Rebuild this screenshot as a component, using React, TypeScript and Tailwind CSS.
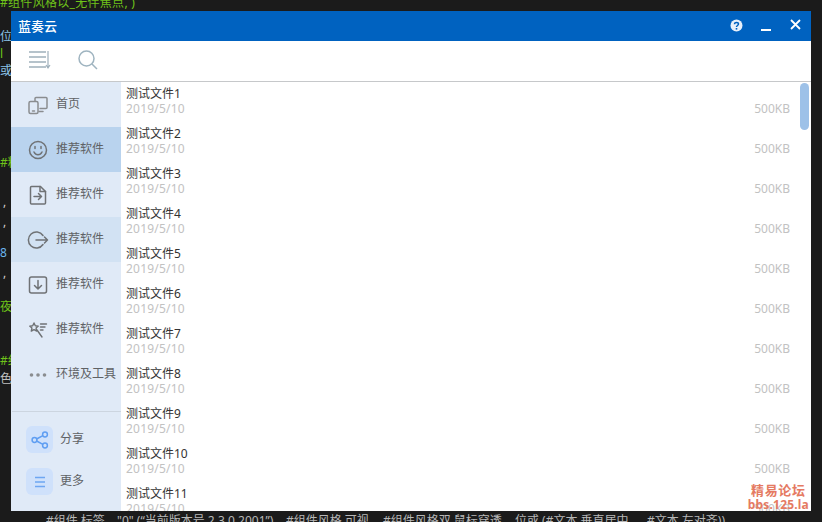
import React from "react";

const FONT = "font-['Noto_Sans','Noto_Sans_CJK_SC',sans-serif]";

function NavIcon({ kind }: { kind: string }) {
  const p = { width: 22, height: 22, viewBox: "0 0 22 22", fill: "none", stroke: "#6f7275", strokeWidth: 1.5, strokeLinecap: "round" as const, strokeLinejoin: "round" as const };
  switch (kind) {
    case "home":
      return (
        <svg {...p}>
          <path d="M8 7V4.500a1 1 0 0 1 1-1h10a1 1 0 0 1 1 1v9a1 1 0 0 1-1 1h-6" stroke="#8a8d90" />
          <rect x="2" y="7.500" width="9" height="12" rx="1.500" stroke="#8a8d90" />
          <path d="M5.500 17h2M12 17.500h4" stroke="#8a8d90" />
        </svg>
      );
    case "smile":
      return (
        <svg {...p}>
          <circle cx="11" cy="11" r="8.500" />
          <path d="M7 13c1 2 2.400 2.800 4 2.800s3-.8 4-2.800" />
          <path d="M8 7.500v2M14 7.500v2" />
        </svg>
      );
    case "file":
      return (
        <svg {...p}>
          <path d="M3.500 3.500a1 1 0 0 1 1-1h9l5 5v11.500a1 1 0 0 1-1 1h-13a1 1 0 0 1-1-1z" />
          <path d="M13 2.500v5h5.500" />
          <path d="M7 12.500h7.500M11.500 9.500l3 3-3 3" />
        </svg>
      );
    case "exit":
      return (
        <svg {...p}>
          <path d="M16 6.500A8 8 0 1 0 16 15.500" />
          <path d="M9 11h11.500M17.500 8l3 3-3 3" />
        </svg>
      );
    case "down":
      return (
        <svg {...p}>
          <rect x="2.500" y="3" width="17" height="16" rx="2" />
          <path d="M11 6.500v8M7.500 11.500l3.500 3.500 3.500-3.500" />
        </svg>
      );
    case "wand":
      return (
        <svg {...p} strokeWidth={1.4}>
          <path d="M7 4l1.300 2.800 3 .3-2.200 2 .6 3L7 10.600 4.300 12.100l.6-3-2.200-2 3-.3z" />
          <path d="M10 11l5 7" />
          <path d="M13.500 5h6M13.500 8h4.500M13.500 11h2.500" />
        </svg>
      );
    default:
      return (
        <svg width={22} height={22} viewBox="0 0 22 22" fill="#8a8d90">
          <circle cx="4.500" cy="11" r="1.800" />
          <circle cx="11" cy="11" r="1.800" />
          <circle cx="17.500" cy="11" r="1.800" />
        </svg>
      );
  }
}

const nav = [
  { icon: "home", label: "首页", bg: "" },
  { icon: "smile", label: "推荐软件", bg: "bg-[#b9d3ee]" },
  { icon: "file", label: "推荐软件", bg: "" },
  { icon: "exit", label: "推荐软件", bg: "bg-[#d2e2f3]" },
  { icon: "down", label: "推荐软件", bg: "" },
  { icon: "wand", label: "推荐软件", bg: "" },
  { icon: "dots", label: "环境及工具", bg: "" },
];

const files = Array.from({ length: 11 }, (_, i) => `测试文件${i + 1}`);

const codeBits = [
  { t: "#组件风格以_无伴焦点, )", c: "left-0 top-[-5px] text-[#6fc31a] tracking-[0.3px]" },
  { t: "位", c: "left-0 top-[29px] text-[#8cc4e8]" },
  { t: "l", c: "left-0 top-[46px] text-[#6fc31a]" },
  { t: "或", c: "left-0 top-[63px] text-[#8cc4e8]" },
  { t: "#精", c: "left-0 top-[155px] text-[#6fc31a]" },
  { t: ",", c: "left-[3px] top-[194px] text-[#d0d0d0]" },
  { t: ",", c: "left-[3px] top-[214px] text-[#d0d0d0]" },
  { t: "8", c: "left-0 top-[245px] text-[#6cb6ee]" },
  { t: ",", c: "left-[3px] top-[265px] text-[#d0d0d0]" },
  { t: "夜)", c: "left-0 top-[299px] text-[#6fc31a]" },
  { t: "#组", c: "left-0 top-[353px] text-[#6fc31a]" },
  { t: "色.", c: "left-0 top-[371px] text-[#c0c0c0]" },
  { t: "#组件 标签 ,", c: "left-[46px] top-[513px] text-[#b8b8b8]" },
  { t: "\"0\" (“当前版本号 2.3.0.2001”) ,", c: "left-[117px] top-[513px] text-[#b8b8b8]" },
  { t: "#组件风格 可视 ,", c: "left-[286px] top-[513px] text-[#b8b8b8]" },
  { t: "#组件风格双 鼠标穿透 ,", c: "left-[383px] top-[513px] text-[#b8b8b8]" },
  { t: "位或 (#文本 垂直居中 ,", c: "left-[515px] top-[513px] text-[#b8b8b8]" },
  { t: "#文本 左对齐))", c: "left-[647px] top-[513px] text-[#b8b8b8]" },
];

export default function App() {
  return (
    <div className={`relative h-[522px] w-[822px] overflow-hidden bg-[#1b1b1b] p-[11px] ${FONT}`}>
      {codeBits.map((b, i) => (
        <span key={i} className={`absolute whitespace-nowrap text-[12px] leading-[16px] ${b.c}`}>{b.t}</span>
      ))}

      <div className="relative flex h-[500px] w-[800px] flex-col overflow-hidden bg-white">
        {/* title bar */}
        <div className="flex h-[30px] shrink-0 items-center bg-[#0062c0] pl-[7px] pr-[10px] text-white">
          <span className="text-[13px] font-medium leading-none">蓝奏云</span>
          <div className="ml-auto flex items-center">
            <svg className="mb-[1px]" width="13" height="13" viewBox="0 0 13 13">
              <circle cx="6.500" cy="6.500" r="6" fill="#e8f0fa" />
              <path d="M4.500 5.200c0-1.200 1-1.800 2-1.800s2 .6 2 1.700c0 1.400-2 1.400-2 2.800" fill="none" stroke="#0062c0" strokeWidth="1.500" />
              <rect x="5.700" y="9" width="1.600" height="1.600" fill="#0062c0" />
            </svg>
            <span className="ml-[18px] mt-[7px] h-[2px] w-[10px] bg-white" />
            <svg className="ml-[19px] mb-[3px]" width="11" height="11" viewBox="0 0 11 11">
              <path d="M1 1l9 9M10 1l-9 9" stroke="#fff" strokeWidth="1.800" />
            </svg>
          </div>
        </div>

        {/* toolbar */}
        <div className="flex h-[41px] shrink-0 items-center border-b border-[#c6c8ca] pl-[17px]">
          <svg className="mb-[2px]" width="23" height="20" viewBox="0 0 23 20" fill="none" stroke="#9fb0bb" strokeWidth="1.400">
            <path d="M1 2h17M1 7h17M1 12h17M1 17h17" />
            <path d="M20 1v16M18 15l2 3 2-3" strokeWidth="1.200" />
          </svg>
          <svg className="ml-[27px] mb-[2px]" width="20" height="20" viewBox="0 0 20 20" fill="none" stroke="#9fb4c0" strokeWidth="1.500">
            <circle cx="8.500" cy="8.500" r="7.500" />
            <path d="M14 14l5 5" />
          </svg>
        </div>

        <div className="flex min-h-0 flex-1">
          {/* sidebar */}
          <div className="flex w-[110px] shrink-0 flex-col bg-[#e0eaf7]">
            {nav.map((n, i) => (
              <div key={i} className={`flex h-[45px] shrink-0 items-center pl-[16px] ${n.bg}`}>
                <span className="flex w-[22px] justify-center"><NavIcon kind={n.icon} /></span>
                <span className="ml-[7px] mb-[2px] whitespace-nowrap text-[12px] text-[#5f6265]">{n.label}</span>
              </div>
            ))}
            <div className="ml-[1px] mt-[14px] border-t border-[#ccd5e0]" />
            <div className="flex flex-col gap-[15px] pl-[15px] pt-[14px]">
              <div className="flex items-center">
                <span className="flex h-[27px] w-[27px] items-center justify-center rounded-[6px] bg-[#cfe1fb]">
                  <svg width="18" height="18" viewBox="0 0 18 18" fill="none" stroke="#5f9ef2" strokeWidth="1.500">
                    <circle cx="3.500" cy="9" r="2.400" />
                    <circle cx="14" cy="3.500" r="2.400" />
                    <circle cx="14" cy="14.500" r="2.400" />
                    <path d="M5.600 8l6.300-3.400M5.600 10l6.300 3.400" />
                  </svg>
                </span>
                <span className="ml-[7px] mb-[2px] text-[12px] text-[#5f6265]">分享</span>
              </div>
              <div className="flex items-center">
                <span className="flex h-[27px] w-[27px] items-center justify-center rounded-[6px] bg-[#cfe1fb]">
                  <svg width="14" height="14" viewBox="0 0 14 14" fill="none" stroke="#6ea6f2" strokeWidth="1.500">
                    <path d="M2 2.500h10M2 7h10M2 11.500h10" />
                  </svg>
                </span>
                <span className="ml-[7px] mb-[2px] text-[12px] text-[#5f6265]">更多</span>
              </div>
            </div>
          </div>

          {/* list */}
          <div className="relative min-w-0 flex-1 overflow-hidden">
            {files.map((f, i) => (
              <div key={i} className="flex h-[40px] items-end pb-[6px] pl-[5px] pr-[21px]">
                <div className="flex-1">
                  <div className="text-[12px] leading-[15px] text-[#333333]">{f}</div>
                  <div className="text-[12px] leading-[15px] tracking-[0.2px] text-[#c2c2c2]">2019/5/10</div>
                </div>
                <div className="text-[12px] leading-[15px] text-[#c2c2c2]">500KB</div>
              </div>
            ))}
            <div className="absolute right-[2px] top-[1px] h-[47px] w-[9px] rounded-full bg-[#9dc1e8]" />
          </div>
        </div>
      </div>

      <div className="absolute right-[13px] top-[482px] flex flex-col items-center text-[#e57a62]">
        <span className="text-[13px] font-bold leading-[16px] tracking-[0.7px]">精易论坛</span>
        <span className="text-[12px] font-bold leading-[13px] tracking-[0.2px]">bbs.125.la</span>
      </div>
    </div>
  );
}
